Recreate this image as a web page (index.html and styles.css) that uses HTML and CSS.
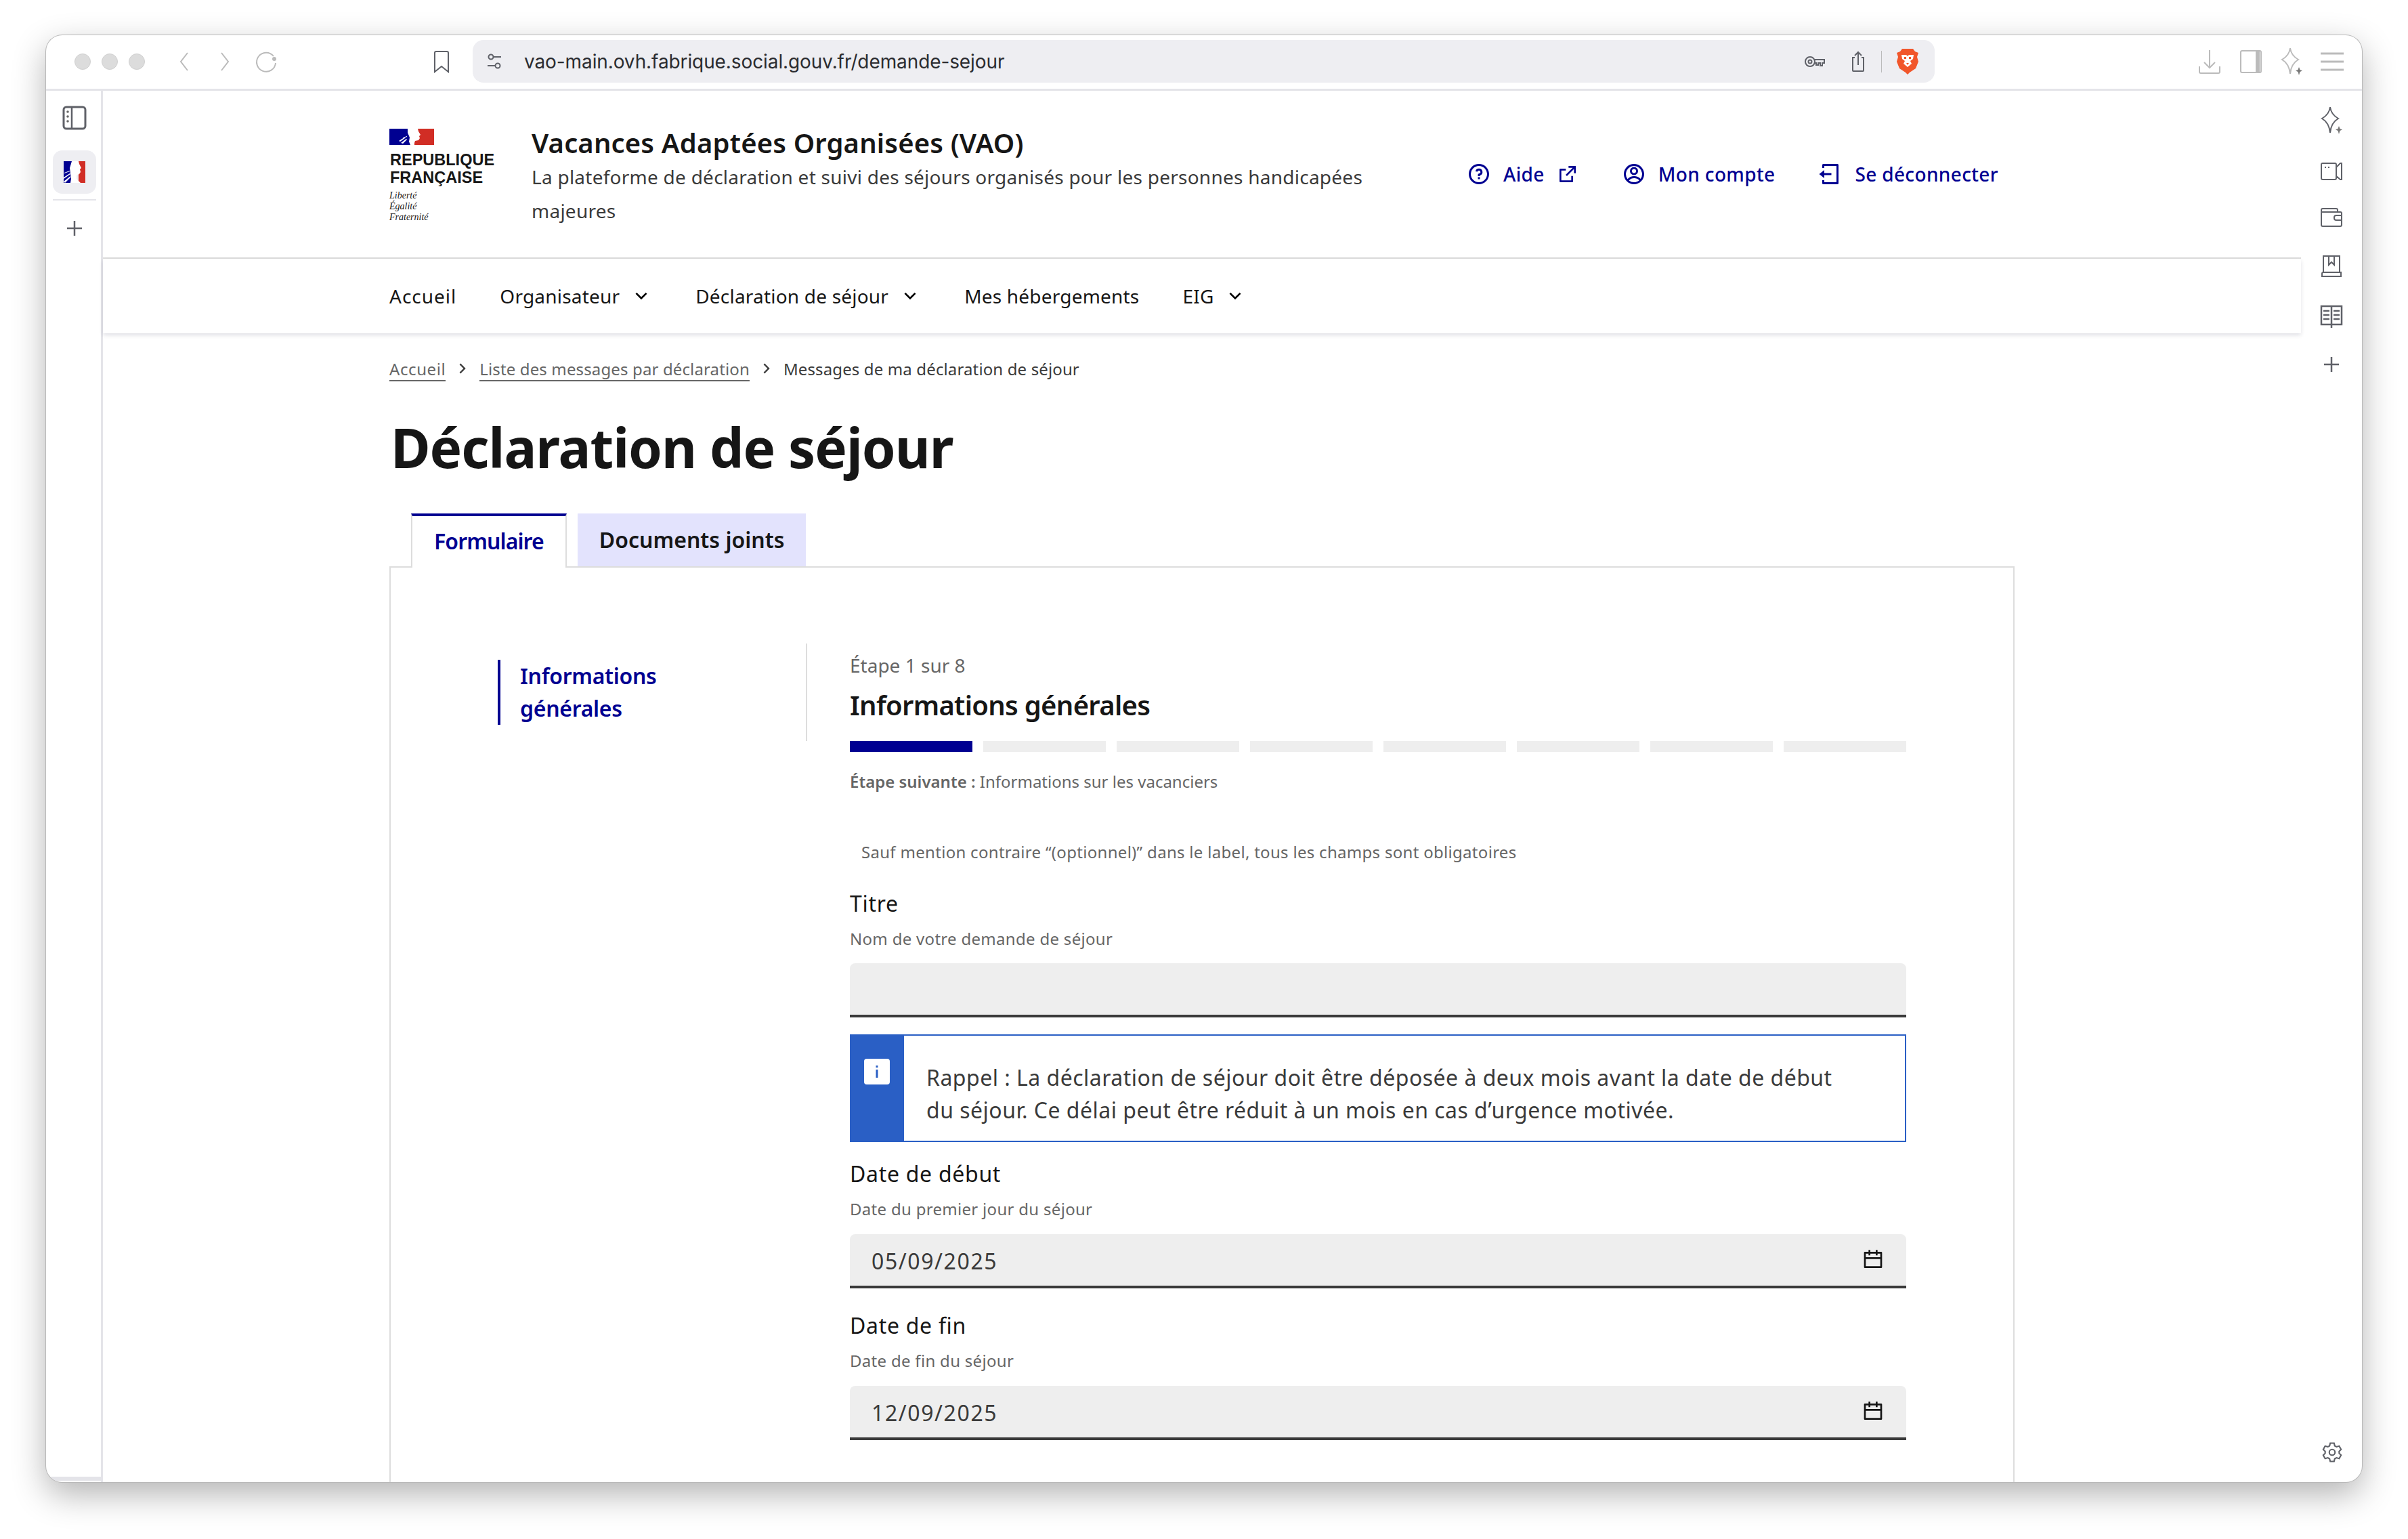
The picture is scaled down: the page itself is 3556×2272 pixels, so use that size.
FILE: index.html
```html
<!DOCTYPE html>
<html lang="fr">
<head>
<meta charset="utf-8">
<title>Déclaration de séjour</title>
<link rel="stylesheet" href="styles.css">
</head>
<body>
<div class="window">
    <div class="toolbar">
        <div class="lights"><span></span><span></span><span></span></div>
        <svg class="tb-icon ml-back" width="24" height="32" viewBox="0 0 24 32"><path d="M17 3 7 16l10 13"/></svg>
        <svg class="tb-icon ml-forward" width="24" height="32" viewBox="0 0 24 32"><path d="M7 3l10 13L7 29"/></svg>
        <svg class="tb-icon ml-reload" width="36" height="36" viewBox="0 0 36 36"><path d="M28 10a14 14 0 1 0 3 10"/><circle cx="29" cy="14" r="3" fill="#bbb" stroke="none"/></svg>
        <svg class="tb-dark ml-bookmark" width="26" height="34" viewBox="0 0 26 34"><path d="M3 4q0-2 2-2h16q2 0 2 2v28l-10-8-10 8z"/></svg>
        <div class="address">
            <svg class="tb-dark" width="26" height="26" viewBox="0 0 26 26"><circle cx="8" cy="6" r="3.500"/><path d="M12 6h11M3 19h11"/><circle cx="18" cy="19" r="3.500"/></svg>
            <span class="url">vao-main.ovh.fabrique.social.gouv.fr/demande-sejour</span>
            <svg class="tb-dark" width="32" height="22" viewBox="0 0 32 22"><circle cx="9" cy="11" r="7"/><circle cx="9" cy="11" r="2.500"/><path d="M16 8h14v5h-3v4h-3v-4h-3v3h-3v-3h-2"/></svg>
            <svg class="tb-dark ml-share" width="24" height="32" viewBox="0 0 24 32"><path d="M7 10H4v19q0 1 1 1h14q1 0 1-1V10h-3M12 21V2M7 7l5-5 5 5"/></svg>
            <span class="addr-sep"></span>
            <svg class="ml-brave" width="34" height="38" viewBox="0 0 34 38"><path fill="#f1562b" d="M9 0h16l3 4 5 2-2 6 2 7-4 10-9 6-3 3-3-3-9-6-4-10 2-7-2-6 5-2z"/><path fill="#fff" d="M8 9h7l2 2 2-2h7l-1 6-4 3 2 4-6 5-6-5 2-4-4-3z"/><path fill="#f1562b" d="M12 12h3v3h-3zM19 12h3v3h-3zM15 21h4l-2 3z"/></svg>
        </div>
        <svg class="tb-icon ml-download" width="34" height="38" viewBox="0 0 34 38"><path d="M17 2v26M9 20l8 8 8-8M2 26v8q0 2 2 2h26q2 0 2-2v-8"/></svg>
        <svg class="tb-icon ml-panel" width="34" height="38" viewBox="0 0 34 38"><rect x="2" y="3" width="30" height="32" rx="2"/><path stroke-width="6" d="M27 3v32"/></svg>
        <svg class="tb-icon ml-star" width="36" height="44" viewBox="0 0 36 44"><use href="#i-sparkle"/></svg>
        <svg class="tb-icon ml-menu" width="34" height="30" viewBox="0 0 34 30"><path stroke-width="3" d="M0 3h34M0 15h34M0 27h34"/></svg>
    </div>

    <div class="browser-body">
        <aside class="left-rail">
            <svg class="tb-dark panel-icon" width="36" height="36" viewBox="0 0 36 36"><rect x="2" y="2" width="32" height="32" rx="4" stroke-width="3"/><path d="M14 2v32" stroke-width="2.500"/><circle cx="8" cy="9" r="1.800" fill="#666" stroke="none"/><circle cx="8" cy="16" r="1.800" fill="#666" stroke="none"/><circle cx="8" cy="23" r="1.800" fill="#666" stroke="none"/></svg>
            <div class="rail-tile">
                <svg width="32" height="32" viewBox="0 0 32 32"><rect width="14" height="32" fill="#000091"/><rect x="22" width="10" height="32" fill="#d12d25"/><path fill="#fff" d="M12 0h10l1 4 3 6-2 2 1 4-2 3-4 2 0 5 6 6H10l1-6-1-8-1-8zM0 24l9-6 1 1-10 7zM0 30l10-8 0 2-8 8zM1 17l8-3 0 1-8 3z"/></svg>
            </div>
            <span class="rail-sep"></span>
            <svg class="tb-dark rail-plus" width="24" height="24" viewBox="0 0 24 24"><path d="M12 1v22M1 12h22" stroke-width="2.500"/></svg>
            <span class="rail-foot"></span>
        </aside>

        <div class="page">
            <header class="site-header">
                <div class="logo">
                    <svg class="flag" width="66" height="24" viewBox="0 0 66 24"><rect width="34" height="24" fill="#000091"/><rect x="36" width="30" height="24" fill="#d12d25"/><path fill="#fff" d="M27 0h15l1 4 3 5-2 2 1 3-2 3-5 1-1 3 0 3H31l-2-5 1-6-3-7zM14 18l8-5 1 1-7 5zM17 21l8-6 1 1-6 6zM20 13l6-2 0 1-5 2z"/></svg>
                    <div class="logo-name">REPUBLIQUE<br>FRANÇAISE</div>
                    <div class="logo-motto">Liberté<br>Égalité<br>Fraternité</div>
                </div>
                <div class="site-text">
                    <div class="site-title">Vacances Adaptées Organisées (VAO)</div>
                    <p class="site-desc">La plateforme de déclaration et suivi des séjours organisés pour les personnes handicapées majeures</p>
                </div>
                <div class="header-links">
                    <a class="h-link">
                        <svg width="36" height="36" viewBox="0 0 24 24"><path d="M12 22C6.477 22 2 17.523 2 12S6.477 2 12 2s10 4.477 10 10-4.477 10-10 10zm0-2a8 8 0 1 0 0-16 8 8 0 0 0 0 16zm-1-5h2v2h-2v-2zm2-1.645V14h-2v-1.500a1 1 0 0 1 1-1 1.500 1.500 0 1 0-1.471-1.794l-1.962-.393A3.501 3.501 0 1 1 13 13.355z"/></svg>
                        <span>Aide</span>
                        <svg class="ext" width="32" height="32" viewBox="0 0 24 24"><path d="M10 6v2H5v11h11v-5h2v6a1 1 0 0 1-1 1H4a1 1 0 0 1-1-1V7a1 1 0 0 1 1-1h6zm11-3v8h-2V6.413l-7.793 7.794-1.414-1.414L17.585 5H13V3h8z"/></svg>
                    </a>
                    <a class="h-link">
                        <svg width="36" height="36" viewBox="0 0 24 24"><path d="M12 22C6.477 22 2 17.523 2 12S6.477 2 12 2s10 4.477 10 10-4.477 10-10 10zm-4.987-3.744A7.966 7.966 0 0 0 12 20c1.970 0 3.773-.712 5.167-1.892A6.979 6.979 0 0 0 12.160 16a6.981 6.981 0 0 0-5.147 2.256zM5.616 16.820A8.975 8.975 0 0 1 12.160 14a8.972 8.972 0 0 1 6.362 2.634 8 8 0 1 0-12.906.187zM12 13a4 4 0 1 1 0-8 4 4 0 0 1 0 8zm0-2a2 2 0 1 0 0-4 2 2 0 0 0 0 4z"/></svg>
                        <span>Mon compte</span>
                    </a>
                    <a class="h-link">
                        <svg width="36" height="36" viewBox="0 0 24 24"><path d="M4 18h2v2h12V4H6v2H4V3a1 1 0 0 1 1-1h14a1 1 0 0 1 1 1v18a1 1 0 0 1-1 1H5a1 1 0 0 1-1-1v-3zm2-7h7v2H6v3l-5-4 5-4v3z"/></svg>
                        <span>Se déconnecter</span>
                    </a>
                </div>
            </header>

            <nav class="main-nav">
                <a class="nav-item">Accueil</a>
                <a class="nav-item">Organisateur <svg width="32" height="32" viewBox="0 0 24 24"><path d="M12 13.172l4.950-4.950 1.414 1.414L12 16 5.636 9.636 7.050 8.222z"/></svg></a>
                <a class="nav-item">Déclaration de séjour <svg width="32" height="32" viewBox="0 0 24 24"><path d="M12 13.172l4.950-4.950 1.414 1.414L12 16 5.636 9.636 7.050 8.222z"/></svg></a>
                <a class="nav-item">Mes hébergements</a>
                <a class="nav-item">EIG <svg width="32" height="32" viewBox="0 0 24 24"><path d="M12 13.172l4.950-4.950 1.414 1.414L12 16 5.636 9.636 7.050 8.222z"/></svg></a>
            </nav>

            <main class="content">
                <div class="breadcrumb">
                    <a>Accueil</a>
                    <svg width="28" height="28" viewBox="0 0 24 24"><path d="M13.172 12l-4.950-4.950 1.414-1.414L16 12l-6.364 6.364-1.414-1.414z"/></svg>
                    <a>Liste des messages par déclaration</a>
                    <svg width="28" height="28" viewBox="0 0 24 24"><path d="M13.172 12l-4.950-4.950 1.414-1.414L16 12l-6.364 6.364-1.414-1.414z"/></svg>
                    <span>Messages de ma déclaration de séjour</span>
                </div>
                <h1>Déclaration de séjour</h1>
                <div class="tabs">
                    <div class="tab tab-active">Formulaire</div>
                    <div class="tab">Documents joints</div>
                </div>
                <div class="panel">
                    <div class="side">
                        <div class="side-item">Informations<br>générales</div>
                    </div>
                    <div class="form">
                        <div class="step-count">Étape 1 sur 8</div>
                        <h2>Informations générales</h2>
                        <div class="steps">
                            <span class="step step-on"></span><span class="step"></span><span class="step"></span><span class="step"></span><span class="step"></span><span class="step"></span><span class="step"></span><span class="step"></span>
                        </div>
                        <p class="next-step"><b>Étape suivante :</b> Informations sur les vacanciers</p>
                        <p class="mention">Sauf mention contraire “(optionnel)” dans le label, tous les champs sont obligatoires</p>

                        <label class="field-label first">Titre</label>
                        <div class="hint">Nom de votre demande de séjour</div>
                        <div class="input"></div>

                        <div class="alert">
                            <div class="alert-side">
                                <svg width="38" height="38" viewBox="0 0 38 38"><rect width="38" height="38" rx="4" fill="#fff"/><path fill="#2a5fc5" d="M17.500 10h3v3h-3zM17.500 16h3v12h-3z"/></svg>
                            </div>
                            <p>Rappel : La déclaration de séjour doit être déposée à deux mois avant la date de début du séjour. Ce délai peut être réduit à un mois en cas d’urgence motivée.</p>
                        </div>

                        <label class="field-label">Date de début</label>
                        <div class="hint">Date du premier jour du séjour</div>
                        <div class="input">
                            <span>05/09/2025</span>
                            <svg width="32" height="32" viewBox="0 0 24 24"><path d="M9 1v2h6V1h2v2h4a1 1 0 0 1 1 1v16a1 1 0 0 1-1 1H3a1 1 0 0 1-1-1V4a1 1 0 0 1 1-1h4V1h2zm11 10H4v8h16v-8zM7 5H4v4h16V5h-3v2h-2V5H9v2H7V5z"/></svg>
                        </div>

                        <label class="field-label">Date de fin</label>
                        <div class="hint">Date de fin du séjour</div>
                        <div class="input">
                            <span>12/09/2025</span>
                            <svg width="32" height="32" viewBox="0 0 24 24"><path d="M9 1v2h6V1h2v2h4a1 1 0 0 1 1 1v16a1 1 0 0 1-1 1H3a1 1 0 0 1-1-1V4a1 1 0 0 1 1-1h4V1h2zm11 10H4v8h16v-8zM7 5H4v4h16V5h-3v2h-2V5H9v2H7V5z"/></svg>
                        </div>
                    </div>
                </div>
            </main>
        </div>

        <aside class="right-rail">
            <svg class="tb-dark" width="36" height="44" viewBox="0 0 36 44"><use href="#i-sparkle"/></svg>
            <svg class="tb-dark" width="34" height="26" viewBox="0 0 34 26"><path d="M24 4V3q0-2-2-2H4Q2 1 2 3v20q0 2 2 2h18q2 0 2-2v-3l6 5h2V1h-2l-6 6zM24 7v13M7 7h2M12 7h2"/></svg>
            <svg class="tb-dark" width="34" height="30" viewBox="0 0 34 30"><path d="M2 7V4q0-2 2-2h20q2 0 2 2v3M2 7v19q0 2 2 2h26q2 0 2-2V9q0-2-2-2zM32 12H24q-3 0-3 3v1q0 3 3 3h8"/></svg>
            <svg class="tb-dark" width="32" height="34" viewBox="0 0 32 34"><path d="M4 26V2h24v24M2 32V28q0-2 2-2h26v6zM2 32h28M12 2v13l4-4 4 4V2"/></svg>
            <svg class="tb-dark" width="34" height="36" viewBox="0 0 34 36"><path d="M2 2h30v27H2zM17 2v32M5 9h9M5 15h9M5 21h9M20 9h9M20 15h9M20 21h9" stroke-width="2.500"/></svg>
            <svg class="tb-dark" width="24" height="24" viewBox="0 0 24 24"><path d="M12 1v22M1 12h22" stroke-width="2.500"/></svg>
            <svg class="tb-dark rail-gear" width="34" height="34" viewBox="0 0 24 24"><circle cx="12" cy="12" r="3" stroke-width="1.500"/><path stroke-width="1.500" d="M10 2.500h4l.7 2.800 1.800 1 2.800-.8 2 3.500-2 2v2l2 2-2 3.500-2.800-.8-1.800 1-.7 2.800h-4l-.7-2.800-1.800-1-2.800.8-2-3.500 2-2v-2l-2-2 2-3.500 2.800.8 1.800-1z"/></svg>
        </aside>
    </div>
</div>

<svg class="defs" width="0" height="0">
    <symbol id="i-sparkle" viewBox="0 0 36 44"><path d="M16 2c1 8 5 13 12 17-7 4-11 11-12 21-1-10-5-17-12-21 7-4 11-9 12-17z"/><path fill="#777" stroke="none" d="M29 30l1.500 4 3.500 1.500-3.500 1.500-1.500 5-1.500-5-3.500-1.500 3.500-1.500z"/></symbol>
</svg>
</body>
</html>
```

FILE: styles.css
```css
* {
    box-sizing: border-box;
}
body {
    margin: 0;
    height: 2272px;
    padding: 52px 68px 0;
    overflow: hidden;
    background: #fff;
    font-family: "Noto Sans", "Open Sans", sans-serif;
    color: #161616;
}
p, h1, h2 {
    margin: 0;
}
.defs {
    position: absolute;
}
.window {
    width: 3420px;
    height: 2136px;
    background: #fff;
    border-radius: 24px;
    box-shadow: 0 0 0 1px #b9b9b9, 0 18px 50px rgba(0, 0, 0, 0.3);
    overflow: hidden;
    display: flex;
    flex-direction: column;
}

/* browser chrome */
.toolbar {
    height: 82px;
    flex: none;
    display: flex;
    align-items: center;
    border-bottom: 3px solid #e4e4e9;
    padding-bottom: 2px;
}
.lights {
    display: flex;
    gap: 16px;
    margin-left: 42px;
}
.lights span {
    width: 24px;
    height: 24px;
    border-radius: 50%;
    background: #dcdcdc;
    border: 1px solid #d0d0d0;
}
.tb-icon, .tb-dark {
    fill: none;
    stroke-width: 2;
    flex: none;
}
.tb-icon {
    stroke: #bbb;
}
.tb-dark {
    stroke: #5f6168;
}
.ml-back { margin-left: 46px; }
.ml-forward { margin-left: 36px; }
.ml-reload { margin-left: 32px; }
.ml-bookmark { margin-left: 227px; }
.address {
    width: 2159px;
    height: 63px;
    margin-left: 33px;
    background: #eeeef2;
    border-radius: 16px;
    display: flex;
    align-items: center;
    padding-left: 19px;
}
.url {
    flex: 1;
    margin-left: 31px;
    font: 28px Inter, "Liberation Sans", sans-serif;
    letter-spacing: -0.1px;
    color: #2b2c30;
}
.ml-share { margin-left: 36px; }
.addr-sep {
    width: 1px;
    height: 32px;
    margin-left: 22px;
    background: #bbb;
}
.ml-brave { margin-left: 21px; margin-right: 23px; }
.ml-download { margin-left: 389px; }
.ml-panel { margin-left: 27px; }
.ml-star { margin-left: 25px; }
.ml-menu { margin-left: 25px; }

.browser-body {
    flex: 1;
    min-height: 0;
    display: flex;
}
.left-rail {
    width: 84px;
    flex: none;
    position: relative;
    border-right: 3px solid #e4e4e9;
    display: flex;
    flex-direction: column;
    align-items: center;
    padding-left: 3px;
}
.panel-icon {
    margin-top: 22px;
}
.rail-tile {
    width: 64px;
    height: 64px;
    margin-top: 30px;
    background: #eeeef2;
    border-radius: 14px;
    display: flex;
    align-items: center;
    justify-content: center;
}
.rail-sep {
    width: 64px;
    height: 2px;
    margin-top: 8px;
    background: #e4e4e9;
}
.rail-plus {
    margin-top: 29px;
}
.rail-foot {
    position: absolute;
    left: 0;
    right: 0;
    bottom: 2px;
    height: 6px;
    background: #e4e4e9;
}
.right-rail {
    width: 90px;
    flex: none;
    position: relative;
    display: flex;
    flex-direction: column;
    align-items: center;
    gap: 40px;
    padding-top: 22px;
}
.rail-gear {
    position: absolute;
    bottom: 27px;
    left: 29px;
}

/* site header */
.page {
    flex: 1;
    min-width: 0;
}
.site-header {
    height: 248px;
    display: flex;
    border-bottom: 2px solid #ddd;
    padding-left: 423px;
}
.logo {
    width: 210px;
    padding-top: 56px;
    flex: none;
}
.flag {
    display: block;
}
.logo-name {
    margin-top: 9px;
    padding-left: 1px;
    font: 700 23.5px/26px "Liberation Sans", sans-serif;
    color: #161616;
}
.logo-motto {
    margin-top: 6px;
    font: italic 14px/16px "Liberation Serif", serif;
    color: #161616;
}
.site-text {
    width: 1290px;
    padding-top: 52px;
}
.site-title {
    font-size: 40px;
    line-height: 50px;
    font-weight: 600;
    letter-spacing: 0.15px;
}
.site-desc {
    font-size: 28px;
    line-height: 50px;
    letter-spacing: 0.25px;
    color: #3a3a3a;
}
.header-links {
    margin-left: 91px;
    display: flex;
    gap: 64px;
    align-items: flex-start;
    padding-top: 99px;
}
.h-link {
    display: flex;
    align-items: center;
    color: #000091;
    font-size: 28px;
    line-height: 48px;
    font-weight: 500;
    letter-spacing: 0.35px;
    fill: #000091;
}
.h-link svg {
    margin-right: 18px;
}
.h-link .ext {
    margin: 0 0 0 18px;
}

/* main nav */
.main-nav {
    height: 110px;
    display: flex;
    align-items: center;
    padding: 0 0 0 423px;
    gap: 64px;
    box-shadow: 0 3px 6px rgba(0, 0, 50, 0.12);
    position: relative;
}
.nav-item {
    display: flex;
    align-items: center;
    gap: 16px;
    font-size: 28px;
    letter-spacing: 0.2px;
    color: #161616;
}
.nav-item:first-child {
    letter-spacing: 1px;
}

/* content */
.content {
    padding: 34px 0 0 423px;
}
.breadcrumb {
    display: flex;
    align-items: center;
    height: 36px;
    font-size: 24px;
    letter-spacing: 0.13px;
    color: #3a3a3a;
    gap: 11px;
}
.breadcrumb a {
    color: #666;
    border-bottom: 2px solid #666;
    line-height: 32px;
    margin-top: 3px;
}
.breadcrumb a:first-child {
    letter-spacing: 0.6px;
}
.breadcrumb svg {
    fill: #3a3a3a;
}
h1 {
    margin: 50px 0 0 2px;
    font-size: 80px;
    line-height: 96px;
    font-weight: 700;
    letter-spacing: -1px;
}
.tabs {
    display: flex;
    gap: 16px;
    margin: 50px 0 0 32px;
    height: 80px;
    position: relative;
    z-index: 1;
}
.tab {
    height: 78px;
    padding: 0 32px;
    background: #e3e3fd;
    font-size: 32px;
    font-weight: 600;
    line-height: 78px;
    color: #161616;
}
.tab-active {
    height: 80px;
    background: #fff;
    color: #000091;
    border-top: 4px solid #000091;
    border-left: 2px solid #ddd;
    border-right: 2px solid #ddd;
    line-height: 74px;
    letter-spacing: -0.9px;
}
.panel {
    width: 2400px;
    height: 1400px;
    margin-top: -2px;
    border: 2px solid #ddd;
    padding-top: 112px;
    display: flex;
    align-items: flex-start;
}
.side {
    flex: none;
    width: 615px;
    height: 144px;
    padding: 24px 0 0 158px;
    border-right: 2px solid #ddd;
}
.side-item {
    height: 96px;
    border-left: 4px solid #000091;
    padding-left: 29px;
    font-size: 32px;
    line-height: 48px;
    font-weight: 600;
    letter-spacing: -0.3px;
    color: #000091;
}
.form {
    width: 1560px;
    margin-left: 63px;
}
.step-count {
    padding-top: 8px;
    padding-bottom: 1px;
    font-size: 28px;
    line-height: 48px;
    color: #666;
}
h2 {
    margin-top: 6px;
    font-size: 40px;
    line-height: 56px;
    font-weight: 600;
    letter-spacing: -0.7px;
}
.steps {
    display: flex;
    gap: 16px;
    margin-top: 25px;
}
.step {
    flex: 1;
    height: 16px;
    background: #eee;
}
.step-on {
    background: #000091;
}
.next-step {
    margin-top: 24px;
    font-size: 24px;
    line-height: 40px;
    color: #666;
}
.next-step b {
    font-weight: 600;
}
.mention {
    margin-top: 64px;
    padding-left: 17px;
    font-size: 24px;
    line-height: 40px;
    letter-spacing: 0.3px;
    color: #666;
}
.field-label {
    display: block;
    margin-top: 23px;
    font-size: 32px;
    line-height: 48px;
    letter-spacing: 0.7px;
    color: #161616;
}
.field-label.first {
    margin-top: 32px;
}
.input + .field-label {
    margin-top: 31px;
}
.hint {
    margin-top: 10px;
    font-size: 24px;
    line-height: 36px;
    letter-spacing: 0.3px;
    color: #666;
}
.input {
    height: 80px;
    margin-top: 18px;
    background: #eee;
    border-radius: 8px 8px 0 0;
    border-bottom: 4px solid #3a3a3a;
    padding: 0 32px;
    display: flex;
    align-items: center;
    justify-content: space-between;
    font-size: 32px;
    letter-spacing: 1.6px;
    color: #3a3a3a;
}
.alert ~ .input {
    margin-top: 19px;
}
.input span {
    margin-top: 2px;
}
.input svg {
    fill: #161616;
    margin-right: 1px;
}
.alert {
    height: 159px;
    margin-top: 25px;
    border: 2px solid #2a5fc5;
    display: flex;
}
.alert-side {
    width: 80px;
    flex: none;
    margin-left: -2px;
    background: #2a5fc5;
    padding: 34px 0 0 21px;
}
.alert p {
    width: 1360px;
    margin: 38px 0 0 33px;
    font-size: 32px;
    line-height: 48px;
    letter-spacing: 0.48px;
    color: #3a3a3a;
}
```
